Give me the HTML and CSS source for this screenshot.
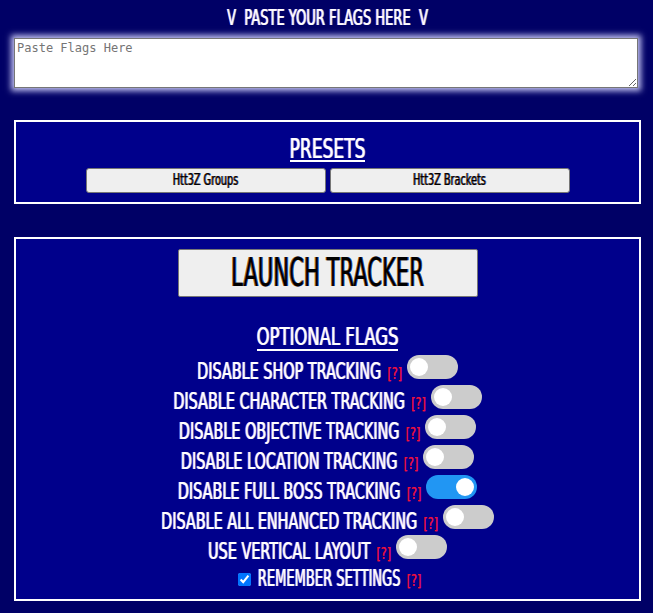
FILE: index.html
```html
<!DOCTYPE html>
<html>
<head>
<meta charset="utf-8">
<link rel="stylesheet" href="styles.css">
</head>
<body>
<div class="page">
  <div class="title"><span class="sx">V&nbsp; PASTE YOUR FLAGS HERE &nbsp;V</span></div>
  <textarea class="paste" placeholder="Paste Flags Here"></textarea>

  <section class="box presets">
    <div class="head"><span class="ul ul-presets"><span class="sx">PRESETS</span></span></div>
    <div class="btns">
      <button class="pb"><span class="sx">Htt3Z Groups</span></button>
      <button class="pb"><span class="sx">Htt3Z Brackets</span></button>
    </div>
  </section>

  <section class="box main">
    <button class="launch"><span class="sx">LAUNCH TRACKER</span></button>
    <div class="head opt"><span class="ul ul-opt"><span class="sx">OPTIONAL FLAGS</span></span></div>
    <div class="row"><span class="sx lbl">DISABLE SHOP TRACKING</span><span class="sx q">[?]</span><span class="tg"><span class="knob"></span></span></div>
    <div class="row"><span class="sx lbl">DISABLE CHARACTER TRACKING</span><span class="sx q">[?]</span><span class="tg"><span class="knob"></span></span></div>
    <div class="row"><span class="sx lbl">DISABLE OBJECTIVE TRACKING</span><span class="sx q">[?]</span><span class="tg"><span class="knob"></span></span></div>
    <div class="row"><span class="sx lbl">DISABLE LOCATION TRACKING</span><span class="sx q">[?]</span><span class="tg"><span class="knob"></span></span></div>
    <div class="row"><span class="sx lbl">DISABLE FULL BOSS TRACKING</span><span class="sx q">[?]</span><span class="tg on"><span class="knob"></span></span></div>
    <div class="row"><span class="sx lbl">DISABLE ALL ENHANCED TRACKING</span><span class="sx q">[?]</span><span class="tg"><span class="knob"></span></span></div>
    <div class="row"><span class="sx lbl">USE VERTICAL LAYOUT</span><span class="sx q">[?]</span><span class="tg"><span class="knob"></span></span></div>
    <div class="row rem"><input type="checkbox" class="cb" checked><span class="sx lbl lbl-rem">REMEMBER SETTINGS</span><span class="sx q">[?]</span></div>
  </section>
</div>
</body>
</html>
```

FILE: styles.css
```css
* { box-sizing: border-box; }
html, body { margin: 0; padding: 0; }
body {
  background: #000066;
  width: 653px;
  height: 613px;
  overflow: hidden;
  color: #fff;
  font-family: "DejaVu Sans Condensed", "DejaVu Sans", sans-serif;
  font-stretch: condensed;
  text-shadow: -0.7px 0 rgba(255, 140, 220, 0.8), 0.7px 0 rgba(140, 230, 255, 0.8);
}
.page { padding: 0 12px 0 14px; }

.sx {
  display: inline-block;
  line-height: var(--lh);
  transform: scaleY(var(--k));
  transform-origin: 50% calc(var(--lh) / 2 + 0.346em);
  white-space: nowrap;
}

.title {
  height: 30px;
  padding-top: 10px;
  text-align: center;
  font-size: 14.5px;
  line-height: 20px;
  --lh: 20px;
  --k: 1.51;
}

.paste {
  display: block;
  width: 624px;
  height: 50px;
  margin: 8px 0 0;
  padding: 2px;
  border: 1px solid #767676;
  border-radius: 0;
  background: #fff;
  font-family: "DejaVu Sans Mono", monospace;
  font-size: 12px;
  text-shadow: none;
  box-shadow: 0 0 6px 3px rgba(215, 215, 255, 0.9);
  resize: both;
}
.paste::placeholder { color: #757575; }

.box {
  border: 2px solid #fff;
  background: #00008b;
}

.presets {
  margin-top: 32px;
  padding: 21px 0 9px;
}

.head { display: flex; justify-content: center; }
.ul { display: block; border-bottom: 2px solid #fff; }
.ul-presets { font-size: 19px; line-height: 17px; --lh: 17px; --k: 1.44; }

.btns {
  display: flex;
  justify-content: center;
  gap: 4px;
  margin-top: 6px;
}
.pb {
  width: 240px;
  height: 25px;
  padding: 3px 0 1px;
  border: 1px solid #767676;
  border-radius: 3px;
  background: #efefef;
  color: #000;
  font-family: inherit;
  font-stretch: condensed;
  font-size: 10.8px;
  line-height: 20px;
  text-shadow: -0.6px 0 rgba(150, 80, 0, 0.8), 0.6px 0 rgba(0, 60, 170, 0.8);
  --lh: 20px;
  --k: 1.4;
}

.main {
  margin-top: 33px;
  padding: 10px 0 5px;
}
.launch {
  display: block;
  width: 300px;
  height: 48px;
  margin: 0 auto;
  padding: 13px 0 3px;
  border: 1px solid #767676;
  border-radius: 2px;
  background: #efefef;
  color: #000;
  font-family: inherit;
  font-stretch: condensed;
  font-size: 23.5px;
  line-height: 30px;
  text-shadow: -0.8px 0 rgba(150, 80, 0, 0.85), 0.8px 0 rgba(0, 60, 170, 0.85);
  --lh: 30px;
  --k: 1.63;
}

.opt { margin-top: 33px; }
.ul-opt { font-size: 18.3px; line-height: 18.7px; --lh: 18.7px; --k: 1.35; }

.row {
  height: 30px;
  text-align: center;
  font-size: 16px;
  line-height: 24px;
  white-space: nowrap;
  --lh: 24px;
}
.opt + .row { margin-top: 4px; }
.lbl { --k: 1.45; }
.q {
  font-size: 12.5px;
  color: #f0103c;
  margin-left: 6px;
  text-shadow: 0.4px 0 rgba(240, 16, 60, 0.8);
  --k: 1.3;
}
.tg {
  display: inline-block;
  width: 51px;
  height: 24px;
  margin-left: 5px;
  padding: 3px;
  border-radius: 12px;
  background: #ccc;
  vertical-align: baseline;
}
.tg.on { background: #2196f3; }
.knob {
  display: block;
  width: 18px;
  height: 18px;
  border-radius: 50%;
  background: #fff;
}
.tg.on .knob { margin-left: auto; }

.rem { height: auto; margin-top: 4.5px; }
.cb {
  width: 13px;
  height: 13px;
  margin: 0 7px 1px 4px;
  vertical-align: baseline;
}
.lbl-rem { font-size: 14.5px; --k: 1.6; }
```
